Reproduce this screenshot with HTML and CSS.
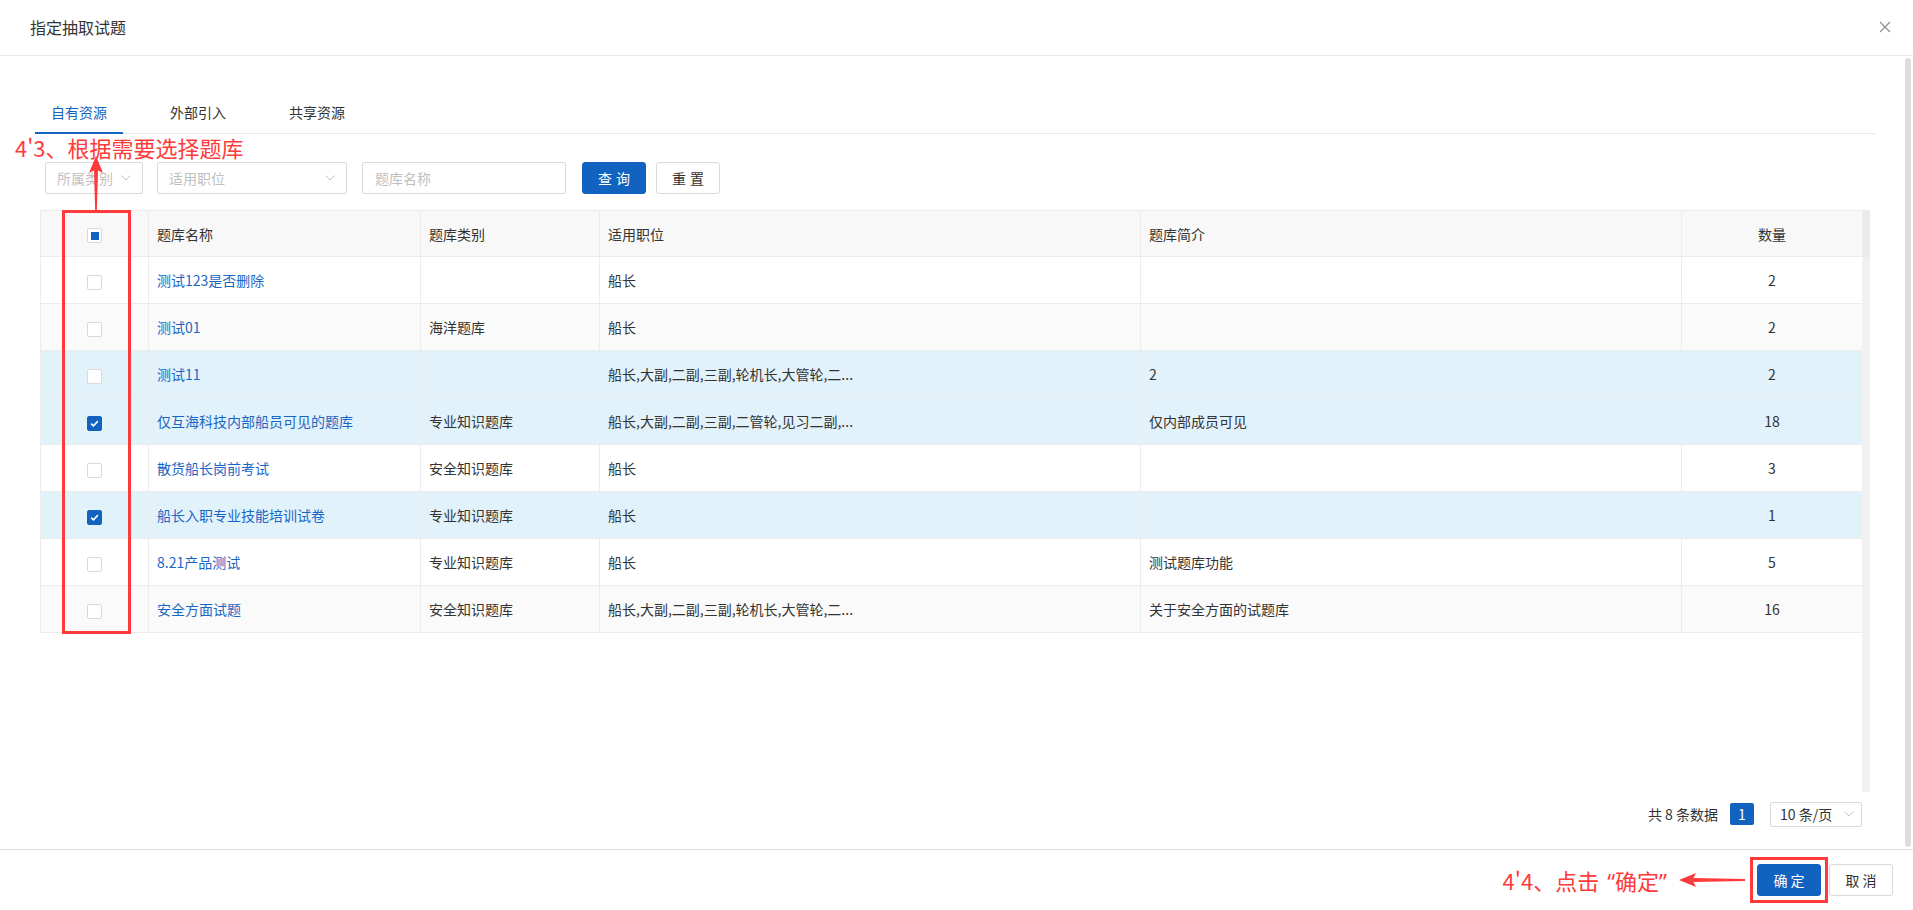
FILE: index.html
```html
<!DOCTYPE html>
<html lang="zh-CN">
<head>
<meta charset="utf-8">
<title>指定抽取试题</title>
<link rel="stylesheet" href="styles.css">
</head>
<body>
<div class="modal">
  <div class="modal-header">
    <span class="modal-title">指定抽取试题</span>
    <svg class="close" width="12" height="12" viewBox="0 0 12 12"><path d="M1 1L11 11M11 1L1 11" stroke="#8c8c8c" stroke-width="1.1" fill="none"/></svg>
  </div>
  <div class="modal-body">
    <div class="body-content">
      <div class="tabs">
        <div class="tab active">自有资源</div>
        <div class="tab">外部引入</div>
        <div class="tab">共享资源</div>
      </div>
      <div class="filters">
        <div class="select sel-cat"><span class="ph">所属类别</span><svg class="chev" width="10" height="6" viewBox="0 0 10 6"><path d="M0.5 0.5L5 5L9.5 0.5" stroke="#c0c0c0" stroke-width="1" fill="none"/></svg></div>
        <div class="select sel-pos"><span class="ph">适用职位</span><svg class="chev" width="10" height="6" viewBox="0 0 10 6"><path d="M0.5 0.5L5 5L9.5 0.5" stroke="#c0c0c0" stroke-width="1" fill="none"/></svg></div>
        <div class="input"><span class="ph">题库名称</span></div>
        <div class="btn btn-primary btn-search">查询</div>
        <div class="btn btn-reset">重置</div>
      </div>
      <div class="table-wrap">
        <div class="table-main">
          <table class="grid">
            <colgroup>
              <col class="c-cb"><col class="c-name"><col class="c-cat"><col class="c-pos"><col class="c-intro"><col class="c-num">
            </colgroup>
            <thead>
              <tr>
                <th class="cb-cell"><span class="cb cb-ind"><span class="cb-dot"></span></span></th>
                <th>题库名称</th>
                <th>题库类别</th>
                <th>适用职位</th>
                <th>题库简介</th>
                <th class="num">数量</th>
              </tr>
            </thead>
            <tbody>
              <tr class="r-white">
                <td class="cb-cell"><span class="cb"></span></td>
                <td><span class="link">测试123是否删除</span></td>
                <td></td>
                <td>船长</td>
                <td></td>
                <td class="num">2</td>
              </tr>
              <tr class="r-stripe">
                <td class="cb-cell"><span class="cb"></span></td>
                <td><span class="link">测试01</span></td>
                <td>海洋题库</td>
                <td>船长</td>
                <td></td>
                <td class="num">2</td>
              </tr>
              <tr class="r-sel">
                <td class="cb-cell"><span class="cb"></span></td>
                <td><span class="link">测试11</span></td>
                <td></td>
                <td>船长,大副,二副,三副,轮机长,大管轮,二...</td>
                <td>2</td>
                <td class="num">2</td>
              </tr>
              <tr class="r-sel">
                <td class="cb-cell"><span class="cb cb-on"><svg width="15" height="15" viewBox="0 0 15 15"><path d="M3.6 7.6L6.3 10.2L11.4 4.8" stroke="#fff" stroke-width="1.8" fill="none"/></svg></span></td>
                <td><span class="link">仅互海科技内部船员可见的题库</span></td>
                <td>专业知识题库</td>
                <td>船长,大副,二副,三副,二管轮,见习二副,...</td>
                <td>仅内部成员可见</td>
                <td class="num">18</td>
              </tr>
              <tr class="r-white">
                <td class="cb-cell"><span class="cb"></span></td>
                <td><span class="link">散货船长岗前考试</span></td>
                <td>安全知识题库</td>
                <td>船长</td>
                <td></td>
                <td class="num">3</td>
              </tr>
              <tr class="r-sel">
                <td class="cb-cell"><span class="cb cb-on"><svg width="15" height="15" viewBox="0 0 15 15"><path d="M3.6 7.6L6.3 10.2L11.4 4.8" stroke="#fff" stroke-width="1.8" fill="none"/></svg></span></td>
                <td><span class="link">船长入职专业技能培训试卷</span></td>
                <td>专业知识题库</td>
                <td>船长</td>
                <td></td>
                <td class="num">1</td>
              </tr>
              <tr class="r-white">
                <td class="cb-cell"><span class="cb"></span></td>
                <td><span class="link">8.21产品测试</span></td>
                <td>专业知识题库</td>
                <td>船长</td>
                <td>测试题库功能</td>
                <td class="num">5</td>
              </tr>
              <tr class="r-stripe">
                <td class="cb-cell"><span class="cb"></span></td>
                <td><span class="link">安全方面试题</span></td>
                <td>安全知识题库</td>
                <td>船长,大副,二副,三副,轮机长,大管轮,二...</td>
                <td>关于安全方面的试题库</td>
                <td class="num">16</td>
              </tr>
            </tbody>
          </table>
        </div>
        <div class="gutter"><div class="gutter-head"></div><div class="gutter-track"></div></div>
        <div class="mark-box"></div>
      </div>
      <div class="pager">
        <span class="total">共&nbsp;8&nbsp;条数据</span>
        <span class="page">1</span>
        <div class="size-select"><span>10 条/页</span><svg class="chev" width="10" height="6" viewBox="0 0 10 6"><path d="M0.5 0.5L5 5L9.5 0.5" stroke="#c0c0c0" stroke-width="1" fill="none"/></svg></div>
      </div>
      <div class="note note-top">4'3、根据需要选择题库</div>
      <svg class="arrow-up" width="16" height="56" viewBox="0 0 16 56"><polygon points="8,0 15,17 10,14.5 8.8,56 7.2,56 6,14.5 1,17" fill="#ff3a3a"/></svg>
    </div>
    <div class="vscroll"></div>
  </div>
  <div class="modal-footer">
    <span class="note note-bottom">4'4、点击<span class="q q-open">“</span>确定<span class="q">”</span></span>
    <svg class="arrow-left" width="66" height="16" viewBox="0 0 66 16"><polygon points="0,8 17,1 14.5,6 66,7 66,9 14.5,10 17,15" fill="#ff3a3a"/></svg>
    <div class="ok-mark"><div class="btn btn-primary btn-ok">确 定</div></div>
    <div class="btn btn-cancel">取 消</div>
  </div>
</div>
</body>
</html>
```
FILE: styles.css
```css
* { box-sizing: border-box; margin: 0; padding: 0; }
html, body { width: 1913px; height: 910px; overflow: hidden; }
body {
  font-family: "Noto Sans CJK SC", "Noto Sans", sans-serif;
  font-size: 14px;
  color: #333;
  background: #fff;
}
.modal { height: 910px; display: flex; flex-direction: column; }

.modal-header {
  flex: none;
  height: 56px;
  border-bottom: 1px solid #ebebeb;
  display: flex;
  align-items: center;
  justify-content: space-between;
  padding: 0 22px 1px 30px;
}
.modal-title { font-size: 16px; line-height: 22px; color: #333; }
.close { display: block; }

.modal-body { flex: 1; display: flex; min-height: 0; }
.body-content {
  flex: 1;
  position: relative;
  padding: 37px 29px 0 35px;
  display: flex;
  flex-direction: column;
}
.vscroll {
  flex: none;
  width: 6px;
  margin: 2px 2px 2px 0;
  background: #dcdcdc;
  border-radius: 3px;
}

.tabs { display: flex; height: 41px; border-bottom: 1px solid #e8e8e8; }
.tab {
  height: 41px;
  margin-bottom: -1px;
  padding: 0 16px;
  margin-right: 31px;
  line-height: 39px;
  font-size: 14px;
  color: #333;
}
.tab.active { color: #1565c0; border-bottom: 2px solid #1565c0; }

.filters { display: flex; height: 32px; margin-top: 28px; margin-left: 10px; }
.select, .input {
  height: 32px;
  border: 1px solid #d9d9d9;
  border-radius: 2px;
  display: flex;
  align-items: center;
  justify-content: space-between;
  padding: 0 11px 0 11px;
  background: #fff;
}
.ph { color: #bfbfbf; font-size: 14px; line-height: 20px; }
.sel-cat { width: 98px; }
.sel-pos { width: 190px; margin-left: 14px; }
.input { width: 204px; margin-left: 15px; padding-left: 12px; }
.chev { display: block; flex: none; }

.btn {
  height: 32px;
  width: 64px;
  border-radius: 3px;
  display: flex;
  align-items: center;
  justify-content: center;
  font-size: 14px;
  line-height: 20px;
}
.btn-primary { background: #1263bf; color: #fff; border: 1px solid #1263bf; }
.btn-search { margin-left: 16px; letter-spacing: 4px; padding-left: 4px; }
.btn-reset { margin-left: 10px; border: 1px solid #d9d9d9; background: #fff; color: #333; letter-spacing: 4px; padding-left: 4px; }

.table-wrap {
  position: relative;
  display: flex;
  height: 582px;
  margin: 16px 6px 0 5px;
}
.table-main { flex: 1; background: #fff; }
.gutter { flex: none; width: 8px; display: flex; flex-direction: column; }
.gutter-head { height: 47px; background: #ebebeb; }
.gutter-track { flex: 1; background: #f1f1f1; }

.grid { width: 100%; table-layout: fixed; border-collapse: separate; border-spacing: 0; }
.c-cb { width: 109px; }
.c-name { width: 272px; }
.c-cat { width: 179px; }
.c-pos { width: 541px; }
.c-intro { width: 541px; }
.grid th, .grid td {
  height: 47px;
  padding: 0 8px;
  border-right: 1px solid #ececec;
  border-bottom: 1px solid #ececec;
  text-align: left;
  font-weight: 400;
  font-size: 14px;
  line-height: 20px;
  white-space: nowrap;
  overflow: hidden;
  color: #333;
}
.grid th:first-child, .grid td:first-child { border-left: 1px solid #ececec; }
.grid th:last-child, .grid td:last-child { border-right: none; }
.grid th { background: #f8f8f8; border-top: 1px solid #ececec; height: 47px; }
.grid .num { text-align: center; }
.grid .cb-cell { text-align: center; padding: 0; }
.r-white td { background: #fff; }
.r-stripe td { background: #fafafa; }
.r-sel td { background: #e2f2fb; }
.link { color: #1a66c4; }

.cb {
  display: inline-flex;
  align-items: center;
  justify-content: center;
  width: 15px;
  height: 15px;
  border: 1px solid #d9d9d9;
  border-radius: 2px;
  background: #fff;
  vertical-align: middle;
}
.cb-dot { width: 8px; height: 8px; background: #1263bf; display: block; }
.cb-on { background: #1263bf; border-color: #1263bf; }
.cb-on svg { display: block; }

.mark-box {
  position: absolute;
  left: 22px;
  top: 0;
  width: 69px;
  height: 424px;
  border: 3px solid #ff3a3a;
}

.pager {
  display: flex;
  justify-content: flex-end;
  align-items: center;
  height: 28px;
  margin-top: 8px;
  padding-right: 14px;
}
.total { font-size: 14px; color: #333; line-height: 20px; }
.page {
  margin-left: 12px;
  width: 24px;
  height: 22px;
  border-radius: 2px;
  background: #1263bf;
  color: #fff;
  font-size: 14px;
  line-height: 22px;
  text-align: center;
}
.size-select {
  margin-left: 16px;
  width: 92px;
  height: 25px;
  border: 1px solid #d9d9d9;
  border-radius: 2px;
  display: flex;
  align-items: center;
  justify-content: space-between;
  padding: 0 7px 0 9px;
  font-size: 14px;
  line-height: 20px;
  color: #333;
}

.note { color: #ff3a3a; font-size: 22px; line-height: 26px; white-space: nowrap; }
.note-top { position: absolute; left: 15px; top: 78px; }
.arrow-up { position: absolute; left: 88px; top: 100px; display: block; }
.q { font-family: "Noto Sans", sans-serif; }
.q-open { margin-left: 8px; }

.modal-footer {
  flex: none;
  height: 61px;
  border-top: 1px solid #dedede;
  display: flex;
  align-items: center;
  justify-content: flex-end;
  padding-right: 20px;
}
.arrow-left { display: block; margin-left: 12px; }
.ok-mark { margin-left: 5px; padding: 4px; border: 3px solid #ff3a3a; }
.btn-cancel { margin-left: 1px; border: 1px solid #d9d9d9; background: #fff; color: #333; }
```
